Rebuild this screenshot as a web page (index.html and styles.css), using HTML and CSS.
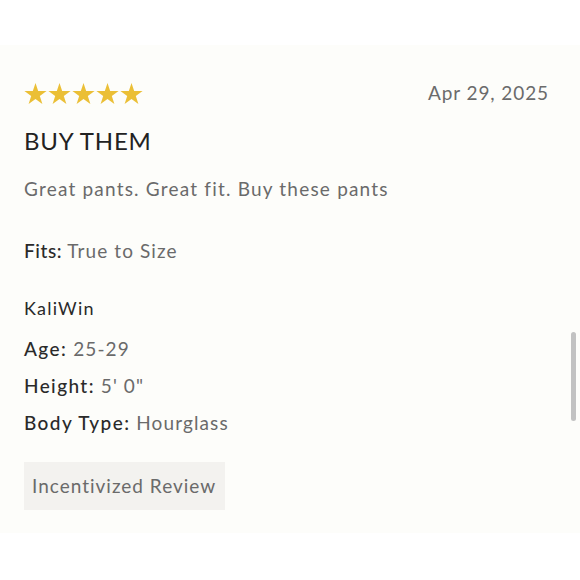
FILE: index.html
```html
<!DOCTYPE html>
<html>
<head>
<meta charset="utf-8">
<link rel="stylesheet" href="styles.css">
</head>
<body>
<div class="panel">
  <div class="top">
    <div class="stars">
      <svg viewBox="0 0 24 23" class="star"><polygon points="12,0 14.8,8.4 23.6,8.4 16.5,13.6 19.2,22 12,16.8 4.8,22 7.5,13.6 0.4,8.4 9.2,8.4"/></svg>
      <svg viewBox="0 0 24 23" class="star"><polygon points="12,0 14.8,8.4 23.6,8.4 16.5,13.6 19.2,22 12,16.8 4.8,22 7.5,13.6 0.4,8.4 9.2,8.4"/></svg>
      <svg viewBox="0 0 24 23" class="star"><polygon points="12,0 14.8,8.4 23.6,8.4 16.5,13.6 19.2,22 12,16.8 4.8,22 7.5,13.6 0.4,8.4 9.2,8.4"/></svg>
      <svg viewBox="0 0 24 23" class="star"><polygon points="12,0 14.8,8.4 23.6,8.4 16.5,13.6 19.2,22 12,16.8 4.8,22 7.5,13.6 0.4,8.4 9.2,8.4"/></svg>
      <svg viewBox="0 0 24 23" class="star"><polygon points="12,0 14.8,8.4 23.6,8.4 16.5,13.6 19.2,22 12,16.8 4.8,22 7.5,13.6 0.4,8.4 9.2,8.4"/></svg>
    </div>
    <div class="date">Apr 29, 2025</div>
  </div>
  <h2 class="title">BUY THEM</h2>
  <p class="body">Great pants. Great fit. Buy these pants</p>
  <p class="fits"><span class="label fits-label">Fits:</span>True to Size</p>
  <p class="author">KaliWin</p>
  <p class="attr first"><span class="label">Age:</span> 25-29</p>
  <p class="attr"><span class="label">Height:</span> 5' 0"</p>
  <p class="attr"><span class="label">Body Type:</span> Hourglass</p>
  <div class="badge">Incentivized Review</div>
  <div class="scrollbar"></div>
</div>
</body>
</html>
```

FILE: styles.css
```css
html, body {
  margin: 0;
  padding: 0;
  background: #ffffff;
}
body {
  font-family: Lato, "Open Sans", sans-serif;
}
.panel {
  position: relative;
  margin-top: 45px;
  height: 488px;
  box-sizing: border-box;
  background: #fdfdfa;
  padding: 38px 31px 0 24px;
}
.top {
  display: flex;
  justify-content: space-between;
  align-items: flex-start;
  height: 23px;
}
.stars {
  display: flex;
  gap: 1px;
}
.star {
  width: 23px;
  height: 22px;
  fill: #ebbf36;
  display: block;
}
.date {
  font-size: 19px;
  color: #6b6b6b;
  letter-spacing: 0.9px;
  line-height: 20px;
}
.title {
  margin: 21px 0 0 0;
  font-size: 24px;
  font-weight: 400;
  color: #222;
  letter-spacing: 0.8px;
  line-height: 28px;
}
.body {
  margin: 23px 0 0 0;
  font-size: 19px;
  color: #6a6a6a;
  letter-spacing: 1.2px;
  line-height: 22px;
}
.fits {
  margin: 40px 0 0 0;
  font-size: 19px;
  color: #6a6a6a;
  letter-spacing: 1.1px;
  line-height: 22px;
}
.label {
  color: #2a2a2a;
  font-weight: 500;
  letter-spacing: 1.4px;
}
.fits-label {
  letter-spacing: 0.6px;
  margin-right: 5px;
}
.author {
  margin: 35px 0 0 0;
  font-size: 18px;
  color: #2a2a2a;
  letter-spacing: 1.2px;
  line-height: 22px;
}
.attr {
  margin: 15px 0 0 0;
  font-size: 19px;
  color: #6a6a6a;
  letter-spacing: 1.1px;
  line-height: 22px;
}
.attr.first {
  margin-top: 19px;
}
.badge {
  display: inline-block;
  margin-top: 28px;
  background: #f3f2ef;
  color: #6a6a6a;
  font-size: 19px;
  letter-spacing: 1px;
  height: 48px;
  line-height: 48px;
  padding: 0 8px 0 8px;
  width: 185px;
}
.scrollbar {
  position: absolute;
  right: 4px;
  top: 287px;
  width: 5px;
  height: 89px;
  border-radius: 3px;
  background: #c2c2c2;
}
```
